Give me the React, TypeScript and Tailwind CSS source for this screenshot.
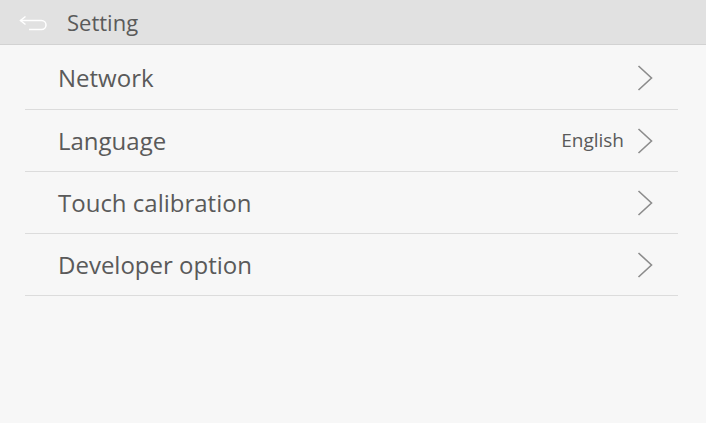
const font = { fontFamily: '"Open Sans", "Noto Sans CJK KR", sans-serif' };

const Chevron = () => (
    <svg width="16" height="26" viewBox="0 0 16 26" fill="none" className="ml-[13px]">
        <path d="M1.5 1 L14.5 13 L1.5 25" stroke="#8c8c8c" strokeWidth="1.6" />
    </svg>
);

const BackArrow = () => (
    <svg width="30" height="18" viewBox="0 0 30 18" fill="none" className="mt-[3px]">
        <path d="M6.5 1.5 L1.5 5.5 L6.5 9.5" stroke="#ffffff" strokeWidth="1.5" />
        <path d="M1.5 5.5 H22.5 A4.5 4.5 0 0 1 22.5 14.5 H10" stroke="#ffffff" strokeWidth="1.5" />
    </svg>
);

const items: { label: string; value?: string }[] = [
    { label: 'Network' },
    { label: 'Language', value: 'English' },
    { label: 'Touch calibration' },
    { label: 'Developer option' },
];

export default function App() {
    return (
        <div className="w-[706px] h-[423px] bg-[#f7f7f7] overflow-hidden" style={font}>
            {/* Header */}
            <div className="h-[45px] bg-[#e1e1e1] border-b border-[#d2d2d2] flex items-center pl-[19px]">
                <BackArrow />
                <span className="ml-[18px] text-[22px] text-[#5a5a5a] leading-none">Setting</span>
            </div>

            {/* Settings list */}
            <div className="ml-[25px] w-[653px]">
                {items.map((item) => (
                    <div key={item.label}
                        className="h-[62px] border-b border-[#dcdcdc] flex items-center pl-[33px] pr-[25px] first:h-[65px] first:pt-px">
                        <span className="flex-1 text-[24px] text-[#5a5a5a] leading-none">{item.label}</span>
                        {item.value && (
                            <span className="text-[19px] text-[#5a5a5a] leading-none">{item.value}</span>
                        )}
                        <Chevron />
                    </div>
                ))}
            </div>
        </div>
    );
}
